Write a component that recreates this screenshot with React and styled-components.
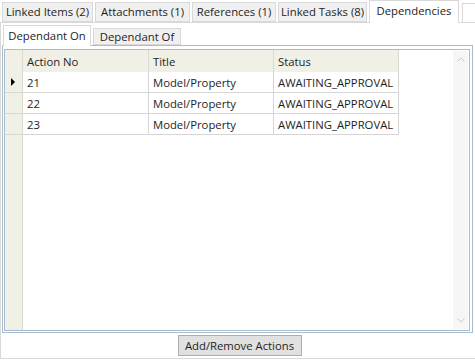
import React from "react";
import styled, { createGlobalStyle } from "styled-components";

const outerTabs = [
  { label: "Linked Items (2)", w: 91 },
  { label: "Attachments (1)", w: 95 },
  { label: "References (1)", w: 84 },
  { label: "Linked Tasks (8)", w: 89 },
  { label: "Dependencies", w: 90, active: true },
];

const rows = [
  { no: "21", title: "Model/Property", status: "AWAITING_APPROVAL", current: true },
  { no: "22", title: "Model/Property", status: "AWAITING_APPROVAL" },
  { no: "23", title: "Model/Property", status: "AWAITING_APPROVAL" },
];

export default function App() {
  return (
    <>
      <GlobalStyle />
      <Window>
        <TabStrip>
          {outerTabs.map((t) => (
            <Tab key={t.label} $w={t.w} $active={t.active}>
              {t.label}
            </Tab>
          ))}
          <StripEdge />
        </TabStrip>
        <Page>
          <SubTabStrip>
            <SubTab $w={88} $active>
              Dependant On
            </SubTab>
            <SubTab $w={88}>Dependant Of</SubTab>
          </SubTabStrip>
          <SubPage>
            <Grid>
              <GridBody>
                <RowHeaderStrip>
                  <CornerCell />
                  {rows.map((r) => (
                    <RowHeaderCell key={r.no}>
                      {r.current && <Arrow />}
                    </RowHeaderCell>
                  ))}
                </RowHeaderStrip>
                <Table>
                  <HeaderRow>
                    <HeadCell>Action No</HeadCell>
                    <HeadCell>Title</HeadCell>
                    <HeadCell>Status</HeadCell>
                  </HeaderRow>
                  {rows.map((r) => (
                    <Row key={r.no}>
                      <Cell>{r.no}</Cell>
                      <Cell>{r.title}</Cell>
                      <Cell>{r.status}</Cell>
                    </Row>
                  ))}
                </Table>
              </GridBody>
              <ScrollBar>
                <ScrollArrow viewBox="0 0 8 5">
                  <path d="M0.5 4.5 L4 1 L7.5 4.5" />
                </ScrollArrow>
                <ScrollArrow viewBox="0 0 8 5">
                  <path d="M0.5 0.5 L4 4 L7.5 0.5" />
                </ScrollArrow>
              </ScrollBar>
            </Grid>
          </SubPage>
          <Footer>
            <Button>Add/Remove Actions</Button>
          </Footer>
        </Page>
      </Window>
    </>
  );
}

const GlobalStyle = createGlobalStyle`
  body {
    margin: 0;
    background: #ffffff;
    font-family: "Segoe UI", "Open Sans", "Noto Sans", sans-serif;
    font-size: 11.3px;
    color: #1e1e1e;
  }
`;

const Window = styled.div`
  width: 475px;
  height: 361px;
  display: flex;
  flex-direction: column;
  background: #ffffff;
  overflow: hidden;
`;

const TabStrip = styled.div`
  display: flex;
  align-items: flex-end;
  height: 22px;
  padding-left: 2px;
  gap: 2px;
  position: relative;
  z-index: 1;
`;

const Tab = styled.div`
  box-sizing: border-box;
  width: ${(p) => p.$w}px;
  height: ${(p) => (p.$active ? 23 : 20)}px;
  margin-bottom: ${(p) => (p.$active ? -1 : 0)}px;
  background: ${(p) => (p.$active ? "#ffffff" : "#f0f0f0")};
  border: 1px solid #d9d9d9;
  border-bottom: ${(p) => (p.$active ? "none" : "1px solid #d9d9d9")};
  display: flex;
  align-items: center;
  justify-content: center;
  padding-bottom: ${(p) => (p.$active ? 4 : 1)}px;
  white-space: nowrap;
`;

const StripEdge = styled.div`
  flex: 1;
  height: 19px;
  margin-left: 1px;
  border: 1px solid #d9d9d9;
  border-right: none;
  border-bottom: none;
  margin-bottom: -1px;
`;

const Page = styled.div`
  box-sizing: border-box;
  height: 337px;
  border: 1px solid #d9d9d9;
  border-right: none;
  display: flex;
  flex-direction: column;
  padding: 2px 2px 0 1px;
`;

const SubTabStrip = styled.div`
  display: flex;
  align-items: flex-end;
  height: 20px;
  padding-left: 1px;
  gap: 2px;
  position: relative;
  z-index: 1;
`;

const SubTab = styled.div`
  box-sizing: border-box;
  width: ${(p) => p.$w}px;
  height: ${(p) => (p.$active ? 21 : 17)}px;
  margin-bottom: ${(p) => (p.$active ? -1 : 0)}px;
  background: ${(p) => (p.$active ? "#ffffff" : "#f0f0f0")};
  border: 1px solid #d9d9d9;
  border-bottom: ${(p) => (p.$active ? "none" : "1px solid #d9d9d9")};
  display: flex;
  align-items: center;
  justify-content: center;
  padding-bottom: ${(p) => (p.$active ? 2 : 0)}px;
  white-space: nowrap;
`;

const SubPage = styled.div`
  box-sizing: border-box;
  height: 288px;
  border: 1px solid #a9bccd;
  padding: 3px 2px 1px 1px;
  display: flex;
`;

const Grid = styled.div`
  flex: 1;
  display: flex;
  border: 1px solid #a9bccd;
  background: #ffffff;
  overflow: hidden;
`;

const GridBody = styled.div`
  flex: 1;
  display: flex;
  align-items: flex-start;
`;

const RowHeaderStrip = styled.div`
  width: 17px;
  align-self: stretch;
  background: #f0f0e6;
  border-right: 1px solid #d9d9d0;
  display: flex;
  flex-direction: column;
`;

const CornerCell = styled.div`
  height: 22px;
  flex: none;
`;

const RowHeaderCell = styled.div`
  height: 20px;
  flex: none;
  border-bottom: 1px solid #d8d8cc;
  display: flex;
  align-items: center;
  justify-content: center;
`;

const Arrow = styled.span`
  width: 0;
  height: 0;
  border-top: 4px solid transparent;
  border-bottom: 4px solid transparent;
  border-left: 4px solid #000000;
  margin-left: -2px;
`;

const Table = styled.div`
  display: grid;
  grid-template-columns: 126px 125px 125px;
`;

const HeaderRow = styled.div`
  display: contents;
`;

const HeadCell = styled.div`
  height: 22px;
  box-sizing: border-box;
  background: #f0f0e6;
  border-right: 1px solid #d9d9cf;
  padding: 1px 4px 0;
  display: flex;
  align-items: center;
`;

const Row = styled.div`
  display: contents;
`;

const Cell = styled.div`
  height: 21px;
  box-sizing: border-box;
  border-right: 1px solid #d6d6d6;
  border-bottom: 1px solid #d6d6d6;
  padding: 1px 4px 0;
  display: flex;
  align-items: center;
  white-space: nowrap;
`;

const ScrollBar = styled.div`
  width: 15px;
  margin: 1px 1px 1px 0;
  background: #f6f6f6;
  display: flex;
  flex-direction: column;
  justify-content: space-between;
  align-items: center;
  padding: 6px 0;
`;

const ScrollArrow = styled.svg`
  width: 8px;
  height: 5px;
  fill: none;
  stroke: #c8c8c8;
  stroke-width: 1;
`;

const Footer = styled.div`
  flex: 1;
  display: flex;
  justify-content: center;
  align-items: flex-start;
  padding-top: 2px;
`;

const Button = styled.button`
  box-sizing: border-box;
  width: 124px;
  height: 21px;
  margin-left: 4px;
  background: #e1e1e1;
  border: 1px solid #adadad;
  font-family: inherit;
  font-size: 11.3px;
  color: #1e1e1e;
  padding: 0;
`;
